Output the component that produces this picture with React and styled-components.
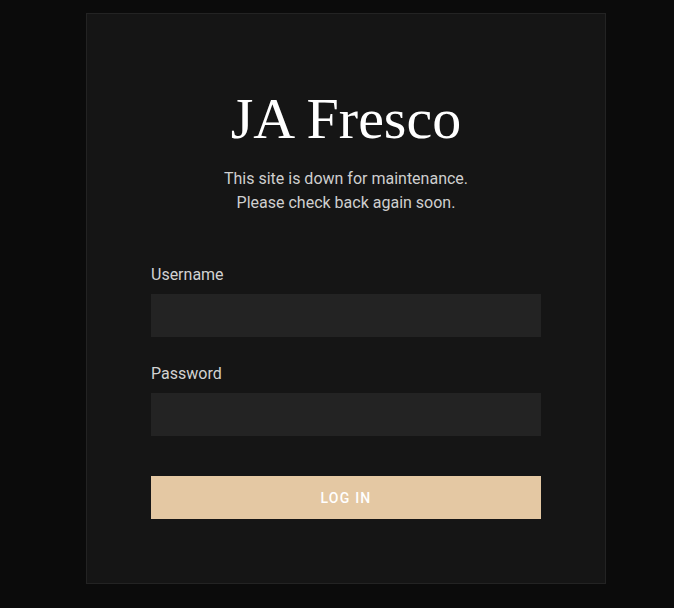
import React from "react";
import styled, { createGlobalStyle } from "styled-components";

const Global = createGlobalStyle`
  html, body { margin: 0; padding: 0; background: #0b0b0b; }
  body { font-family: Roboto, "Liberation Sans", sans-serif; }
  * { box-sizing: border-box; }
`;

const Page = styled.div`
  min-height: 608px;
  display: flex;
  justify-content: center;
  padding-top: 13px;
  padding-left: 18px;
`;

const Card = styled.div`
  width: 520px;
  height: 571px;
  background: #151515;
  border: 1px solid #232323;
  padding: 71px 64px 0;
  display: flex;
  flex-direction: column;
  align-items: stretch;
`;

const Title = styled.h1`
  margin: 0;
  font-family: "Liberation Serif", "DejaVu Serif", serif;
  font-weight: 400;
  font-size: 58px;
  line-height: 68px;
  color: #ffffff;
  text-align: center;
`;

const Subtitle = styled.p`
  margin: 14px 0 0;
  font-size: 16px;
  line-height: 24px;
  color: #cfcfcf;
  text-align: center;
`;

const Form = styled.form`
  margin-top: 48px;
  display: flex;
  flex-direction: column;
`;

const Field = styled.div`
  display: flex;
  flex-direction: column;
  margin-bottom: 25px;
`;

const Label = styled.label`
  font-size: 16px;
  line-height: 24px;
  color: #d2d2d2;
  margin-bottom: 7px;
`;

const Input = styled.input`
  height: 43px;
  width: 100%;
  background: #232323;
  border: none;
  outline: none;
  color: #ddd;
  padding: 0 12px;
  font-size: 15px;
  font-family: inherit;
`;

const Button = styled.button`
  margin-top: 15px;
  height: 43px;
  width: 100%;
  background: #e4c8a3;
  border: none;
  color: #ffffff;
  font-family: Roboto, "Liberation Sans", sans-serif;
  font-weight: 500;
  font-size: 14px;
  letter-spacing: 1.2px;
  text-transform: uppercase;
  cursor: pointer;
`;

export default function App() {
  return (
    <>
      <Global />
      <Page>
        <Card>
          <Title>JA Fresco</Title>
          <Subtitle>
            This site is down for maintenance.
            <br />
            Please check back again soon.
          </Subtitle>
          <Form onSubmit={(e) => e.preventDefault()}>
            <Field>
              <Label htmlFor="username">Username</Label>
              <Input id="username" type="text" />
            </Field>
            <Field>
              <Label htmlFor="password">Password</Label>
              <Input id="password" type="password" />
            </Field>
            <Button type="submit">Log in</Button>
          </Form>
        </Card>
      </Page>
    </>
  );
}
